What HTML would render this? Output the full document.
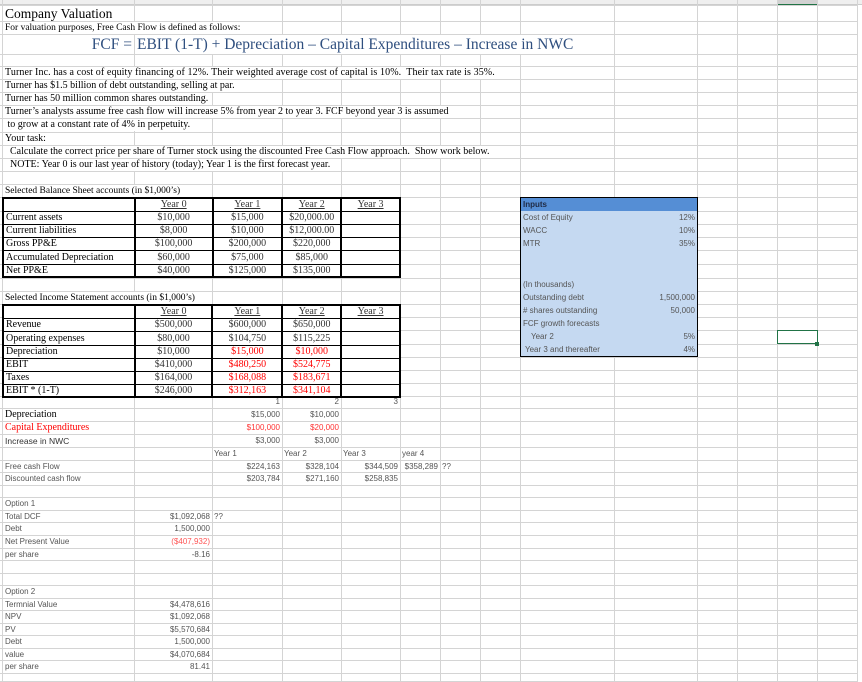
<!DOCTYPE html>
<html><head><meta charset="utf-8"><style>
*{margin:0;padding:0;box-sizing:border-box}
body{width:862px;height:682px;position:relative;background:#fff;overflow:hidden;font-family:"Liberation Serif",serif;color:#000}
.h{position:absolute;left:0;width:858px;height:1px;background:#d4d4d4}
.v{position:absolute;top:0;width:1px;height:682px;background:#d4d4d4}
.t{position:absolute;white-space:nowrap;font-size:10px;background:#fff;padding-left:2px}
.s{position:absolute;white-space:nowrap;font-family:"Liberation Sans",sans-serif;font-size:8px;color:#555;padding-left:2px}
.r{text-align:right;padding-right:2px;padding-left:0}
.red{color:#f00}
table{position:absolute;border-collapse:collapse;background:#fff}
td{border-left:2px solid #000;border-right:2px solid #000;border-top:1px solid #000;border-bottom:1px solid #000;font-size:10px;padding:0 2px;white-space:nowrap;overflow:hidden;line-height:11px}
td.c{text-align:center;color:#333}
td.c.red{color:#f00}
td.u{text-decoration:underline}
</style></head><body>
<div style="position:absolute;left:0;top:0;width:862px;height:5px;background:#efefef;border-bottom:1px solid #ccc"></div>
<div style="position:absolute;left:777px;top:0;width:40px;height:5px;background:#d2d2d2;border-bottom:1px solid #217346"></div>
<div class="h" style="top:5px"></div><div class="h" style="top:21px"></div><div class="h" style="top:34px"></div><div class="h" style="top:54px"></div><div class="h" style="top:66px"></div><div class="h" style="top:79px"></div><div class="h" style="top:92px"></div><div class="h" style="top:105px"></div><div class="h" style="top:118px"></div><div class="h" style="top:132px"></div><div class="h" style="top:145px"></div><div class="h" style="top:158px"></div><div class="h" style="top:171px"></div><div class="h" style="top:184px"></div><div class="h" style="top:197px"></div><div class="h" style="top:211px"></div><div class="h" style="top:224px"></div><div class="h" style="top:237px"></div><div class="h" style="top:250px"></div><div class="h" style="top:264px"></div><div class="h" style="top:278px"></div><div class="h" style="top:291px"></div><div class="h" style="top:304px"></div><div class="h" style="top:317px"></div><div class="h" style="top:330px"></div><div class="h" style="top:344px"></div><div class="h" style="top:357px"></div><div class="h" style="top:370px"></div><div class="h" style="top:383px"></div><div class="h" style="top:396px"></div><div class="h" style="top:408px"></div><div class="h" style="top:421px"></div><div class="h" style="top:434px"></div><div class="h" style="top:447px"></div><div class="h" style="top:460px"></div><div class="h" style="top:472px"></div><div class="h" style="top:485px"></div><div class="h" style="top:497px"></div><div class="h" style="top:510px"></div><div class="h" style="top:522px"></div><div class="h" style="top:535px"></div><div class="h" style="top:548px"></div><div class="h" style="top:560px"></div><div class="h" style="top:573px"></div><div class="h" style="top:585px"></div><div class="h" style="top:598px"></div><div class="h" style="top:610px"></div><div class="h" style="top:623px"></div><div class="h" style="top:635px"></div><div class="h" style="top:648px"></div><div class="h" style="top:660px"></div><div class="h" style="top:673px"></div><div class="h" style="top:681px"></div>
<div class="v" style="left:2px"></div><div class="v" style="left:134px"></div><div class="v" style="left:212px"></div><div class="v" style="left:282px"></div><div class="v" style="left:341px"></div><div class="v" style="left:400px"></div><div class="v" style="left:440px"></div><div class="v" style="left:480px"></div><div class="v" style="left:520px"></div><div class="v" style="left:614px"></div><div class="v" style="left:697px"></div><div class="v" style="left:737px"></div><div class="v" style="left:777px"></div><div class="v" style="left:817px"></div><div class="v" style="left:857px"></div>

<div class="t" style="left:3px;top:6px;height:15px;line-height:15px;font-size:13.5px;width:130px">Company Valuation</div>
<div class="t" style="left:3px;top:22px;height:12px;line-height:12px;font-size:9.5px;width:255px">For valuation purposes, Free Cash Flow is defined as follows:</div>
<div class="t r" style="left:3px;top:35px;height:19px;line-height:19px;width:131px;font-size:15.5px;color:#2f4f7f;background:transparent">FCF =</div>
<div class="t" style="left:135px;top:35px;height:19px;line-height:19px;font-size:15.5px;color:#2f4f7f;width:440px">EBIT (1-T) + Depreciation – Capital Expenditures – Increase in NWC</div>
<div class="t" style="left:3px;top:67px;height:12px;line-height:12px;width:490px;letter-spacing:0.1px">Turner Inc. has a cost of equity financing of 12%. Their weighted average cost of capital is 10%.&nbsp; Their tax rate is 35%.</div>
<div class="t" style="left:3px;top:80px;height:12px;line-height:12px;width:235px">Turner has $1.5 billion of debt outstanding, selling at par.</div>
<div class="t" style="left:3px;top:93px;height:12px;line-height:12px;width:208px">Turner has 50 million common shares outstanding.</div>
<div class="t" style="left:3px;top:106px;height:12px;line-height:12px;width:476px">Turner’s analysts assume free cash flow will increase 5% from year 2 to year 3. FCF beyond year 3 is assumed</div>
<div class="t" style="left:3px;top:119px;height:12px;line-height:12px;width:208px">&nbsp;to grow at a constant rate of 4% in perpetuity.</div>
<div class="t" style="left:3px;top:133px;height:12px;line-height:12px;width:60px">Your task:</div>
<div class="t" style="left:3px;top:146px;height:12px;line-height:12px;width:490px">&nbsp;&nbsp;Calculate the correct price per share of Turner stock using the discounted Free Cash Flow approach.&nbsp; Show work below.</div>
<div class="t" style="left:3px;top:159px;height:12px;line-height:12px;width:336px">&nbsp;&nbsp;NOTE: Year 0 is our last year of history (today); Year 1 is the first forecast year.</div>
<div class="t" style="left:3px;top:185px;height:12px;line-height:12px;font-size:9.5px;width:195px">Selected Balance Sheet accounts (in $1,000’s)</div>
<div class="t" style="left:3px;top:292px;height:12px;line-height:12px;font-size:9.5px;width:205px">Selected Income Statement accounts (in $1,000’s)</div>

<table style="left:2px;top:197px;width:399px;border:2px solid #000">
<colgroup><col style="width:132px"><col style="width:78px"><col style="width:70px"><col style="width:59px"><col style="width:59px"></colgroup>
<tr style="height:13px"><td></td><td class="c u">Year 0</td><td class="c u">Year 1</td><td class="c u">Year 2</td><td class="c u">Year 3</td></tr>
<tr style="height:13px"><td>Current assets</td><td class="c">$10,000</td><td class="c">$15,000</td><td class="c">$20,000.00</td><td></td></tr>
<tr style="height:13px"><td>Current liabilities</td><td class="c">$8,000</td><td class="c">$10,000</td><td class="c">$12,000.00</td><td></td></tr>
<tr style="height:13px"><td>Gross PP&amp;E</td><td class="c">$100,000</td><td class="c">$200,000</td><td class="c">$220,000</td><td></td></tr>
<tr style="height:14px"><td>Accumulated Depreciation</td><td class="c">$60,000</td><td class="c">$75,000</td><td class="c">$85,000</td><td></td></tr>
<tr style="height:13px"><td>Net PP&amp;E</td><td class="c">$40,000</td><td class="c">$125,000</td><td class="c">$135,000</td><td></td></tr>
</table>

<table style="left:2px;top:304px;width:399px;border:2px solid #000">
<colgroup><col style="width:132px"><col style="width:78px"><col style="width:70px"><col style="width:59px"><col style="width:59px"></colgroup>
<tr style="height:13px"><td></td><td class="c u">Year 0</td><td class="c u">Year 1</td><td class="c u">Year 2</td><td class="c u">Year 3</td></tr>
<tr style="height:13px"><td>Revenue</td><td class="c">$500,000</td><td class="c">$600,000</td><td class="c">$650,000</td><td></td></tr>
<tr style="height:14px"><td>Operating expenses</td><td class="c">$80,000</td><td class="c">$104,750</td><td class="c">$115,225</td><td></td></tr>
<tr style="height:13px"><td>Depreciation</td><td class="c">$10,000</td><td class="c red">$15,000</td><td class="c red">$10,000</td><td></td></tr>
<tr style="height:13px"><td>EBIT</td><td class="c">$410,000</td><td class="c red">$480,250</td><td class="c red">$524,775</td><td></td></tr>
<tr style="height:13px"><td>Taxes</td><td class="c">$164,000</td><td class="c red">$168,088</td><td class="c red">$183,671</td><td></td></tr>
<tr style="height:13px"><td>EBIT * (1-T)</td><td class="c">$246,000</td><td class="c red">$312,163</td><td class="c red">$341,104</td><td></td></tr>
</table>

<div style="position:absolute;left:520px;top:197px;width:178px;height:160px;border:1.5px solid #000;background:#c5d9f1"></div>
<div style="position:absolute;left:521px;top:198px;width:176px;height:13px;background:#558ed5"></div>
<div class="s" style="left:521px;top:198px;line-height:13px;font-weight:bold;color:#1f2a44">Inputs</div>
<div class="s" style="left:521px;top:212px;line-height:12px">Cost of Equity</div>
<div class="s r" style="left:620px;width:77px;top:212px;line-height:12px">12%</div>
<div class="s" style="left:521px;top:225px;line-height:12px">WACC</div>
<div class="s r" style="left:620px;width:77px;top:225px;line-height:12px">10%</div>
<div class="s" style="left:521px;top:238px;line-height:12px">MTR</div>
<div class="s r" style="left:620px;width:77px;top:238px;line-height:12px">35%</div>
<div class="s" style="left:521px;top:279px;line-height:12px">(In thousands)</div>
<div class="s" style="left:521px;top:292px;line-height:12px">Outstanding debt</div>
<div class="s r" style="left:600px;width:97px;top:292px;line-height:12px">1,500,000</div>
<div class="s" style="left:521px;top:305px;line-height:12px"># shares outstanding</div>
<div class="s r" style="left:600px;width:97px;top:305px;line-height:12px">50,000</div>
<div class="s" style="left:521px;top:318px;line-height:12px">FCF growth forecasts</div>
<div class="s" style="left:529px;top:331px;line-height:12px">Year 2</div>
<div class="s r" style="left:620px;width:77px;top:331px;line-height:12px">5%</div>
<div class="s" style="left:523px;top:344px;line-height:12px">Year 3 and thereafter</div>
<div class="s r" style="left:620px;width:77px;top:344px;line-height:12px">4%</div>

<div style="position:absolute;left:777px;top:330px;width:41px;height:14px;border:1.5px solid #217346"></div>
<div style="position:absolute;left:815px;top:342px;width:4px;height:4px;background:#217346"></div>

<div class="s r" style="left:212px;width:70px;top:396px;line-height:12px">1</div>
<div class="s r" style="left:282px;width:59px;top:396px;line-height:12px">2</div>
<div class="s r" style="left:341px;width:59px;top:396px;line-height:12px">3</div>
<div class="t" style="left:3px;top:409px;line-height:12px;height:12px;width:100px;background:transparent">Depreciation</div>
<div class="s r" style="left:212px;width:70px;top:409px;line-height:12px">$15,000</div>
<div class="s r" style="left:282px;width:59px;top:409px;line-height:12px">$10,000</div>
<div class="t red" style="left:3px;top:422px;line-height:12px;height:12px;width:100px;background:transparent">Capital Expenditures</div>
<div class="s r" style="left:212px;width:70px;top:422px;line-height:12px;color:#f33">$100,000</div>
<div class="s r" style="left:282px;width:59px;top:422px;line-height:12px;color:#f33">$20,000</div>
<div class="s" style="left:3px;top:435px;line-height:12px;font-size:8.5px;color:#333">Increase in NWC</div>
<div class="s r" style="left:212px;width:70px;top:435px;line-height:12px">$3,000</div>
<div class="s r" style="left:282px;width:59px;top:435px;line-height:12px">$3,000</div>
<div class="s" style="left:212px;top:448px;line-height:12px">Year 1</div>
<div class="s" style="left:282px;top:448px;line-height:12px">Year 2</div>
<div class="s" style="left:341px;top:448px;line-height:12px">Year 3</div>
<div class="s" style="left:400px;top:448px;line-height:12px">year 4</div>
<div class="s" style="left:3px;top:461px;line-height:12px">Free cash Flow</div>
<div class="s r" style="left:212px;width:70px;top:461px;line-height:12px">$224,163</div>
<div class="s r" style="left:282px;width:59px;top:461px;line-height:12px">$328,104</div>
<div class="s r" style="left:341px;width:59px;top:461px;line-height:12px">$344,509</div>
<div class="s r" style="left:398px;width:42px;top:461px;line-height:12px">$358,289</div>
<div class="s" style="left:440px;top:461px;line-height:12px">??</div>
<div class="s" style="left:3px;top:473px;line-height:12px">Discounted cash flow</div>
<div class="s r" style="left:212px;width:70px;top:473px;line-height:12px">$203,784</div>
<div class="s r" style="left:282px;width:59px;top:473px;line-height:12px">$271,160</div>
<div class="s r" style="left:341px;width:59px;top:473px;line-height:12px">$258,835</div>

<div class="s" style="left:3px;top:498px;line-height:12px">Option 1</div>
<div class="s" style="left:3px;top:511px;line-height:12px">Total DCF</div>
<div class="s r" style="left:134px;width:78px;top:511px;line-height:12px">$1,092,068</div>
<div class="s" style="left:212px;top:511px;line-height:12px">??</div>
<div class="s" style="left:3px;top:523px;line-height:12px">Debt</div>
<div class="s r" style="left:134px;width:78px;top:523px;line-height:12px">1,500,000</div>
<div class="s" style="left:3px;top:536px;line-height:12px">Net Present Value</div>
<div class="s r" style="left:134px;width:78px;top:536px;line-height:12px;color:#f55">($407,932)</div>
<div class="s" style="left:3px;top:549px;line-height:12px">per share</div>
<div class="s r" style="left:134px;width:78px;top:549px;line-height:12px">-8.16</div>

<div class="s" style="left:3px;top:586px;line-height:12px">Option 2</div>
<div class="s" style="left:3px;top:599px;line-height:12px">Termnial Value</div>
<div class="s r" style="left:134px;width:78px;top:599px;line-height:12px">$4,478,616</div>
<div class="s" style="left:3px;top:611px;line-height:12px">NPV</div>
<div class="s r" style="left:134px;width:78px;top:611px;line-height:12px">$1,092,068</div>
<div class="s" style="left:3px;top:624px;line-height:12px">PV</div>
<div class="s r" style="left:134px;width:78px;top:624px;line-height:12px">$5,570,684</div>
<div class="s" style="left:3px;top:636px;line-height:12px">Debt</div>
<div class="s r" style="left:134px;width:78px;top:636px;line-height:12px">1,500,000</div>
<div class="s" style="left:3px;top:649px;line-height:12px">value</div>
<div class="s r" style="left:134px;width:78px;top:649px;line-height:12px">$4,070,684</div>
<div class="s" style="left:3px;top:661px;line-height:12px">per share</div>
<div class="s r" style="left:134px;width:78px;top:661px;line-height:12px">81.41</div>
</body></html>
